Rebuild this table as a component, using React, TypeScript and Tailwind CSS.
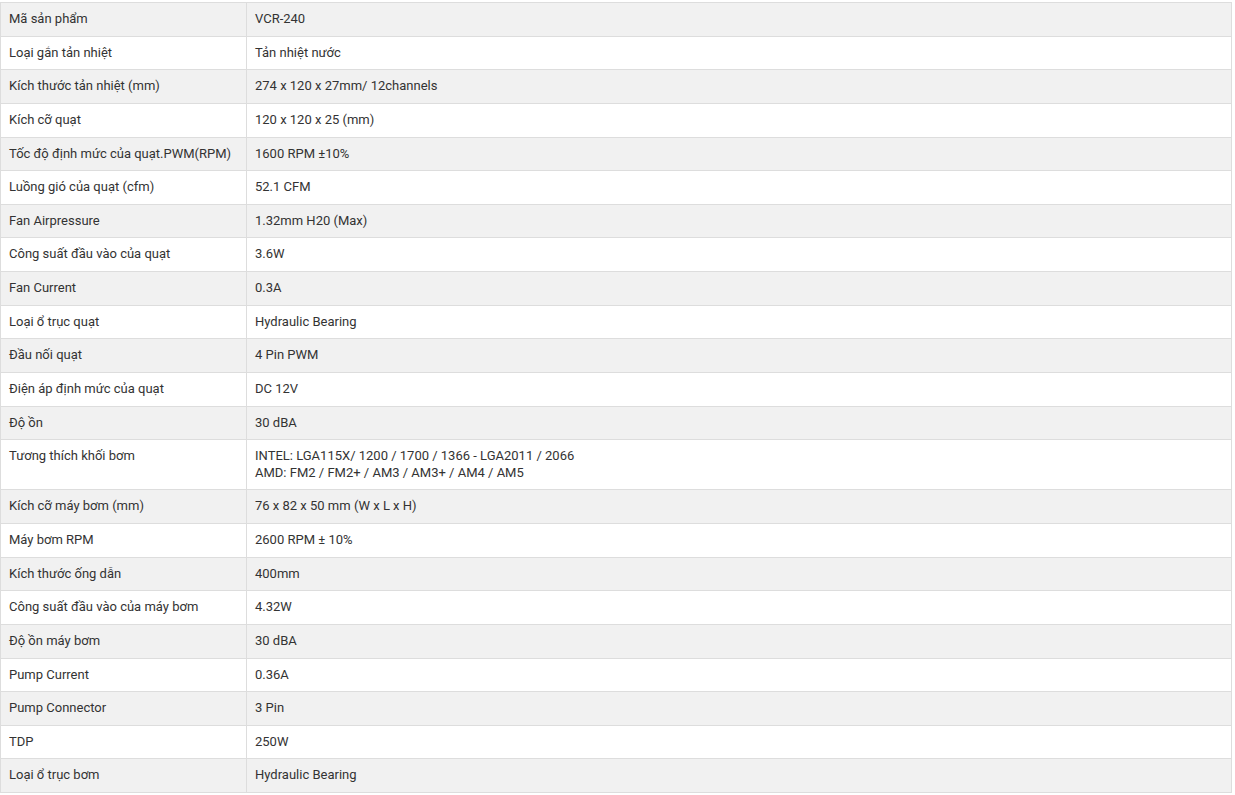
const rows: [string, string[]][] = [
  ["Mã sản phẩm", ["VCR-240"]],
  ["Loại gắn tản nhiệt", ["Tản nhiệt nước"]],
  ["Kích thước tản nhiệt (mm)", ["274 x 120 x 27mm/ 12channels"]],
  ["Kích cỡ quạt", ["120 x 120 x 25 (mm)"]],
  ["Tốc độ định mức của quạt.PWM(RPM)", ["1600 RPM ±10%"]],
  ["Luồng gió của quạt (cfm)", ["52.1 CFM"]],
  ["Fan Airpressure", ["1.32mm H20 (Max)"]],
  ["Công suất đầu vào của quạt", ["3.6W"]],
  ["Fan Current", ["0.3A"]],
  ["Loại ổ trục quạt", ["Hydraulic Bearing"]],
  ["Đầu nối quạt", ["4 Pin PWM"]],
  ["Điện áp định mức của quạt", ["DC 12V"]],
  ["Độ ồn", ["30 dBA"]],
  [
    "Tương thích khối bơm",
    ["INTEL: LGA115X/ 1200 / 1700 / 1366 - LGA2011 / 2066", "AMD: FM2 / FM2+ / AM3 / AM3+ / AM4 / AM5"],
  ],
  ["Kích cỡ máy bơm (mm)", ["76 x 82 x 50 mm (W x L x H)"]],
  ["Máy bơm RPM", ["2600 RPM ± 10%"]],
  ["Kích thước ống dẫn", ["400mm"]],
  ["Công suất đầu vào của máy bơm", ["4.32W"]],
  ["Độ ồn máy bơm", ["30 dBA"]],
  ["Pump Current", ["0.36A"]],
  ["Pump Connector", ["3 Pin"]],
  ["TDP", ["250W"]],
  ["Loại ổ trục bơm", ["Hydraulic Bearing"]],
];

const App = () => {
  return (
    <div className="bg-white pt-[2px] font-['Roboto','Liberation_Sans',sans-serif] text-[13px] leading-[16.63px] text-[#333]">
      <table className="w-[1232px] border-collapse border border-[#ddd] text-left">
        <tbody>
          {rows.map(([label, value], i) => (
            <tr key={label} className={i % 2 === 0 ? "bg-[#f1f1f1]" : "bg-white"}>
              <td className="w-[246px] border border-[#ddd] px-2 py-2 align-top">{label}</td>
              <td className="border border-[#ddd] px-2 py-2 align-top">
                {value.map((line) => (
                  <div key={line}>{line}</div>
                ))}
              </td>
            </tr>
          ))}
        </tbody>
      </table>
    </div>
  );
};

export default App;
